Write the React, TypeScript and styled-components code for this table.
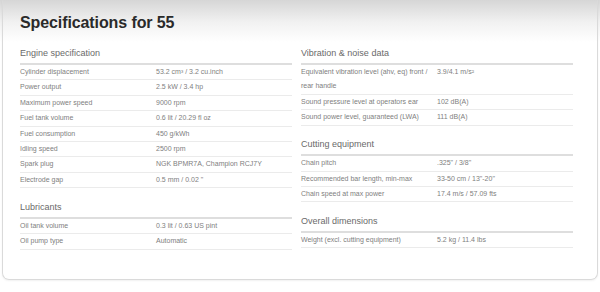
import React from 'react';
import styled, { createGlobalStyle } from 'styled-components';

type Spec = { label: string; value: string };
type Section = { title: string; rows: Spec[] };

const leftSections: Section[] = [
  {
    title: 'Engine specification',
    rows: [
      { label: 'Cylinder displacement', value: '53.2 cm³ / 3.2 cu.inch' },
      { label: 'Power output', value: '2.5 kW / 3.4 hp' },
      { label: 'Maximum power speed', value: '9000 rpm' },
      { label: 'Fuel tank volume', value: '0.6 lit / 20.29 fl oz' },
      { label: 'Fuel consumption', value: '450 g/kWh' },
      { label: 'Idling speed', value: '2500 rpm' },
      { label: 'Spark plug', value: 'NGK BPMR7A, Champion RCJ7Y' },
      { label: 'Electrode gap', value: '0.5 mm / 0.02 "' },
    ],
  },
  {
    title: 'Lubricants',
    rows: [
      { label: 'Oil tank volume', value: '0.3 lit / 0.63 US pint' },
      { label: 'Oil pump type', value: 'Automatic' },
    ],
  },
];

const rightSections: Section[] = [
  {
    title: 'Vibration & noise data',
    rows: [
      { label: 'Equivalent vibration level (ahv, eq) front / rear handle', value: '3.9/4.1 m/s²' },
      { label: 'Sound pressure level at operators ear', value: '102 dB(A)' },
      { label: 'Sound power level, guaranteed (LWA)', value: '111 dB(A)' },
    ],
  },
  {
    title: 'Cutting equipment',
    rows: [
      { label: 'Chain pitch', value: '.325" / 3/8"' },
      { label: 'Recommended bar length, min-max', value: '33-50 cm / 13"-20"' },
      { label: 'Chain speed at max power', value: '17.4 m/s / 57.09 fts' },
    ],
  },
  {
    title: 'Overall dimensions',
    rows: [{ label: 'Weight (excl. cutting equipment)', value: '5.2 kg / 11.4 lbs' }],
  },
];

const GlobalStyle = createGlobalStyle`
  html, body {
    margin: 0;
    padding: 0;
    background: #fff;
  }
  body {
    width: 600px;
    height: 292px;
    overflow: hidden;
    background: linear-gradient(to bottom, #d6d6d6 0px, #f1f1f1 22px, #ffffff 42px);
    font-family: "Liberation Sans", Arial, sans-serif;
  }
`;

const SpecTable: React.FC<{ section: Section }> = ({ section }) => (
  <Block>
    <Heading>{section.title}</Heading>
    {section.rows.map((row) => (
      <Row key={row.label}>
        <Label>{row.label}</Label>
        <Value>{row.value}</Value>
      </Row>
    ))}
  </Block>
);

const App: React.FC = () => (
  <>
    <GlobalStyle />
    <Panel>
      <Title>Specifications for 55</Title>
      <Columns>
        <Column>
          {leftSections.map((s) => (
            <SpecTable key={s.title} section={s} />
          ))}
        </Column>
        <Column>
          {rightSections.map((s) => (
            <SpecTable key={s.title} section={s} />
          ))}
        </Column>
      </Columns>
    </Panel>
  </>
);

const Panel = styled.div`
  box-sizing: border-box;
  margin-left: 2px;
  width: 596px;
  height: 280px;
  padding: 12px 25px 0 17px;
  border: 1px solid #dadada;
  border-top-color: transparent;
  border-radius: 0 0 7px 7px;
  box-shadow: 0 1px 2px rgba(0, 0, 0, 0.06);
`;

const Title = styled.h1`
  margin: 0;
  font-size: 16px;
  line-height: 20px;
  font-weight: bold;
  color: #2a2a2a;
  letter-spacing: -0.1px;
`;

const Columns = styled.div`
  display: grid;
  grid-template-columns: 272px 272px;
  column-gap: 9px;
  margin-top: 13px;
`;

const Column = styled.div`
  display: flex;
  flex-direction: column;
  gap: 11.5px;
`;

const Block = styled.div`
  display: flex;
  flex-direction: column;
`;

const Heading = styled.div`
  font-size: 9px;
  line-height: 14px;
  color: #6a6a6a;
  padding-bottom: 3px;
  border-bottom: 2px solid #dedede;
`;

const Row = styled.div`
  display: grid;
  grid-template-columns: 136px 1fr;
  font-size: 7px;
  line-height: 14.4px;
  color: #808080;
  border-bottom: 1px solid #ebebeb;
`;

const Label = styled.span`
  padding-right: 2px;
`;

const Value = styled.span``;

export default App;
